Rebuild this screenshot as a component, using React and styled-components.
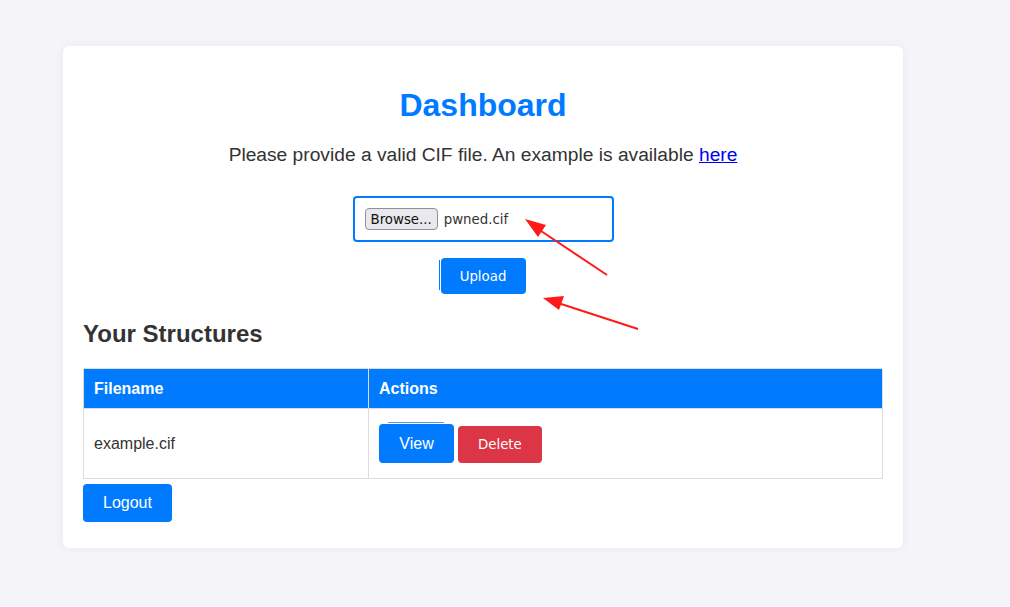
import React from 'react'
import styled, { createGlobalStyle } from 'styled-components'

const Global = createGlobalStyle`
  html, body { margin: 0; padding: 0; background: #f4f4f9; }
  body { font-family: "Liberation Sans", Arial, sans-serif; color: #333; }
`

const Page = styled.div`
  width: 1010px;
  height: 607px;
  position: relative;
  overflow: hidden;
  padding-top: 46px;
  box-sizing: border-box;
`

const Card = styled.div`
  margin-left: 63px;
  width: 840px;
  box-sizing: border-box;
  padding: 20px 20px 26px;
  background: #fff;
  border-radius: 6px;
  box-shadow: 0 0 8px rgba(0, 0, 0, 0.06);
  display: flex;
  flex-direction: column;
`

const Title = styled.h1`
  margin: 21px 0 0;
  text-align: center;
  color: #007bff;
  font-size: 32px;
  line-height: 37px;
  font-weight: bold;
`

const Intro = styled.p`
  margin: 20px 0 0;
  text-align: center;
  font-size: 19.2px;
  line-height: 22px;
  a { color: #0000ee; }
`

const UploadForm = styled.form`
  margin-top: 30px;
  display: flex;
  flex-direction: column;
  align-items: center;
  gap: 16px;
`

const FileBox = styled.div`
  width: 261px;
  height: 46px;
  box-sizing: border-box;
  border: 2px solid #007bff;
  border-radius: 4px;
  padding: 0 10px;
  display: flex;
  align-items: center;
  gap: 6px;
  font-family: "DejaVu Sans", sans-serif;
  font-size: 13.33px;
  color: #333;
`

const Browse = styled.span`
  display: inline-flex;
  align-items: center;
  height: 22px;
  box-sizing: border-box;
  padding: 0 5px;
  background: #e9e9ed;
  border: 1px solid #8f8f9d;
  border-radius: 4px;
  color: #111;
  font-size: 13.33px;
`

const Btn = styled.button`
  position: relative;
  border: none;
  border-radius: 4px;
  color: #fff;
  background: ${p => (p.$danger ? '#dc3545' : '#007bff')};
  font-family: ${p => (p.$sys ? '"DejaVu Sans", sans-serif' : '"Liberation Sans", Arial, sans-serif')};
  font-size: ${p => (p.$sys ? '13.33px' : '16px')};
  height: ${p => p.$h || 36}px;
  padding: 0 ${p => p.$px || 20}px;
  cursor: pointer;
`

const UploadBtn = styled(Btn)`
  width: 85px;
  padding: 0;
  &::before {
    content: '';
    position: absolute;
    left: -2px;
    top: 2px;
    width: 1px;
    height: 30px;
    background: #007bff;
  }
`

const ViewBtn = styled(Btn)`
  width: 75px;
  padding: 0;
  &::before {
    content: '';
    position: absolute;
    left: 9px;
    top: -2px;
    width: 56px;
    height: 1px;
    background: #4d9dff;
  }
`

const SubTitle = styled.h2`
  margin: 26px 0 0;
  font-size: 24px;
  line-height: 28px;
  font-weight: bold;
`

const Table = styled.table`
  margin-top: 20px;
  width: 100%;
  border-collapse: collapse;
  font-size: 16px;
`

const Th = styled.th`
  background: #007bff;
  color: #fff;
  text-align: left;
  font-weight: bold;
  height: 40px;
  padding: 0 10px;
  border: 1px solid #ddd;
  box-sizing: border-box;
  width: ${p => p.$w || 'auto'};
`

const Td = styled.td`
  height: 70px;
  padding: 0 10px;
  border: 1px solid #ddd;
  box-sizing: border-box;
`

const Actions = styled.div`
  display: flex;
  align-items: flex-end;
  gap: 4px;
`

const Footer = styled.div`
  margin-top: 5px;
`

const Arrows = styled.svg`
  position: absolute;
  left: 0;
  top: 0;
  pointer-events: none;
`

export default function App() {
  return (
    <>
      <Global />
      <Page>
        <Card>
          <Title>Dashboard</Title>
          <Intro>
            Please provide a valid CIF file. An example is available <a href="#">here</a>
          </Intro>
          <UploadForm onSubmit={e => e.preventDefault()}>
            <FileBox>
              <Browse>Browse...</Browse>
              <span>pwned.cif</span>
            </FileBox>
            <UploadBtn $sys $h={36}>Upload</UploadBtn>
          </UploadForm>
          <SubTitle>Your Structures</SubTitle>
          <Table>
            <thead>
              <tr>
                <Th $w="285px">Filename</Th>
                <Th>Actions</Th>
              </tr>
            </thead>
            <tbody>
              <tr>
                <Td>example.cif</Td>
                <Td>
                  <Actions>
                    <ViewBtn $h={39}>View</ViewBtn>
                    <Btn $danger $sys $h={37} $px={20}>Delete</Btn>
                  </Actions>
                </Td>
              </tr>
            </tbody>
          </Table>
          <Footer>
            <Btn $h={38} $px={20}>Logout</Btn>
          </Footer>
        </Card>
        <Arrows width="1010" height="607" viewBox="0 0 1010 607">
          <g stroke="#ff1a1a" strokeWidth="2" fill="#ff1a1a">
            <line x1="607" y1="275" x2="535" y2="227" />
            <polygon points="525,219 546,225 538,237" stroke="none" />
            <line x1="638" y1="329" x2="555" y2="302" />
            <polygon points="543,298 564,296 559,310" stroke="none" />
          </g>
        </Arrows>
      </Page>
    </>
  )
}
